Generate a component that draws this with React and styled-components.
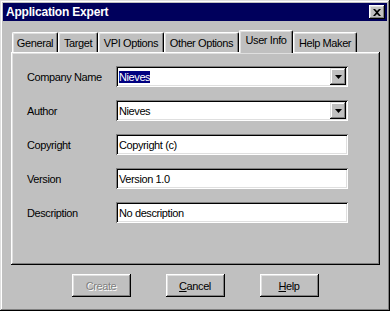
import React from "react";
import styled, { createGlobalStyle } from "styled-components";

const GlobalStyle = createGlobalStyle`
  html, body {
    margin: 0;
    padding: 0;
    background: #c0c0c0;
  }
  body {
    font-family: "Liberation Sans", Arial, sans-serif;
    font-size: 11px;
    letter-spacing: -0.4px;
    color: #000;
  }
`;

const tabs = [
  { label: "General", width: 46 },
  { label: "Target", width: 40 },
  { label: "VPI Options", width: 66 },
  { label: "Other Options", width: 75 },
  { label: "User Info", width: 54, active: true },
  { label: "Help Maker", width: 64 },
];

const fields = [
  { label: "Company Name", value: "Nieves", combo: true, selected: true },
  { label: "Author", value: "Nieves", combo: true },
  { label: "Copyright", value: "Copyright (c)" },
  { label: "Version", value: "Version 1.0" },
  { label: "Description", value: "No description" },
];

const App = () => {
  return (
    <>
      <GlobalStyle />
      <Window>
        <TitleBar>
          <TitleText>Application Expert</TitleText>
          <CloseButton>
            <svg width="8" height="7" viewBox="0 0 8 7">
              <path d="M0 0h2l2 2 2-2h2L5 3.5 8 7H6L4 5 2 7H0l3-3.5z" fill="#000" />
            </svg>
          </CloseButton>
        </TitleBar>
        <Content>
          <TabStrip>
            {tabs.map((t) => (
              <Tab key={t.label} $width={t.width} $active={t.active}>
                {t.label}
              </Tab>
            ))}
          </TabStrip>
          <TabPanel>
            <Form>
              {fields.map((f) => (
                <React.Fragment key={f.label}>
                  <Label>{f.label}</Label>
                  <Field>
                    <FieldText>
                      {f.selected ? <Selection>{f.value}</Selection> : f.value}
                    </FieldText>
                    {f.combo && (
                      <DropButton>
                        <svg width="7" height="4" viewBox="0 0 7 4">
                          <path d="M0 0h7L3.5 4z" fill="#000" />
                        </svg>
                      </DropButton>
                    )}
                  </Field>
                </React.Fragment>
              ))}
            </Form>
          </TabPanel>
        </Content>
        <ButtonRow>
          <Button disabled>Create</Button>
          <Button>
            <u>C</u>ancel
          </Button>
          <Button>
            <u>H</u>elp
          </Button>
        </ButtonRow>
      </Window>
    </>
  );
};

const Window = styled.div`
  width: 390px;
  height: 311px;
  box-sizing: border-box;
  padding: 3px;
  background: #c0c0c0;
  box-shadow: inset -1px -1px #000, inset 1px 1px #dfdfdf,
    inset -2px -2px #808080, inset 2px 2px #fff;
  display: flex;
  flex-direction: column;
`;

const TitleBar = styled.div`
  height: 18px;
  background: #00005c;
  display: flex;
  align-items: center;
  justify-content: space-between;
  padding: 0 2px 0 3px;
`;

const TitleText = styled.span`
  color: #fff;
  font-weight: bold;
  font-size: 12px;
  letter-spacing: -0.2px;
`;

const CloseButton = styled.div`
  width: 16px;
  height: 14px;
  box-sizing: border-box;
  background: #c0c0c0;
  box-shadow: inset -1px -1px #000, inset 1px 1px #fff,
    inset -2px -2px #808080, inset 2px 2px #dfdfdf;
  display: flex;
  align-items: center;
  justify-content: center;
`;

const Content = styled.div`
  padding: 9px 7px 0 8px;
`;

const TabStrip = styled.div`
  display: flex;
  align-items: flex-end;
  height: 22px;
  padding-left: 1px;
`;

const Tab = styled.div`
  width: ${(p) => p.$width}px;
  height: ${(p) => (p.$active ? 23 : 20)}px;
  margin-bottom: ${(p) => (p.$active ? -1 : 0)}px;
  position: relative;
  z-index: ${(p) => (p.$active ? 2 : 0)};
  box-sizing: border-box;
  background: #c0c0c0;
  border-top: 1px solid #fff;
  border-left: 1px solid #fff;
  border-right: 1px solid #000;
  border-radius: 2px 2px 0 0;
  box-shadow: inset -1px 0 #808080, inset 1px 1px #dfdfdf;
  display: flex;
  align-items: ${(p) => (p.$active ? "flex-start" : "center")};
  padding-top: ${(p) => (p.$active ? 3 : 0)}px;
  justify-content: center;
  white-space: nowrap;
`;

const TabPanel = styled.div`
  width: 369px;
  height: 213px;
  box-sizing: border-box;
  background: #c0c0c0;
  box-shadow: inset -1px -1px #000, inset 1px 1px #fff,
    inset -2px -2px #808080, inset 2px 2px #dfdfdf;
`;

const Form = styled.div`
  display: grid;
  grid-template-columns: 89px 232px;
  grid-auto-rows: 21px;
  row-gap: 13px;
  padding: 14px 0 0 16px;
  align-items: center;
`;

const Label = styled.div`
  white-space: nowrap;
`;

const Field = styled.div`
  height: 21px;
  box-sizing: border-box;
  background: #fff;
  box-shadow: inset 1px 1px #808080, inset -1px -1px #fff,
    inset 2px 2px #000, inset -2px -2px #dfdfdf;
  display: flex;
  align-items: center;
  padding: 0 2px 0 3px;
`;

const FieldText = styled.div`
  flex: 1;
  white-space: nowrap;
`;

const Selection = styled.span`
  background: #000080;
  color: #fff;
`;

const DropButton = styled.div`
  width: 16px;
  height: 17px;
  box-sizing: border-box;
  background: #c0c0c0;
  box-shadow: inset -1px -1px #000, inset 1px 1px #dfdfdf,
    inset -2px -2px #808080, inset 2px 2px #fff;
  display: flex;
  align-items: center;
  justify-content: center;
`;

const ButtonRow = styled.div`
  display: flex;
  justify-content: center;
  gap: 35px;
  margin-top: 9px;
`;

const Button = styled.button`
  width: 59px;
  height: 23px;
  box-sizing: border-box;
  border: 0;
  padding: 0;
  background: #c0c0c0;
  font-family: "Liberation Sans", Arial, sans-serif;
  font-size: 11px;
  letter-spacing: -0.4px;
  color: #000;
  box-shadow: inset -1px -1px #000, inset 1px 1px #fff,
    inset -2px -2px #808080, inset 2px 2px #dfdfdf;
  &:disabled {
    color: #808080;
    text-shadow: 1px 1px #fff;
  }
`;

export default App;
